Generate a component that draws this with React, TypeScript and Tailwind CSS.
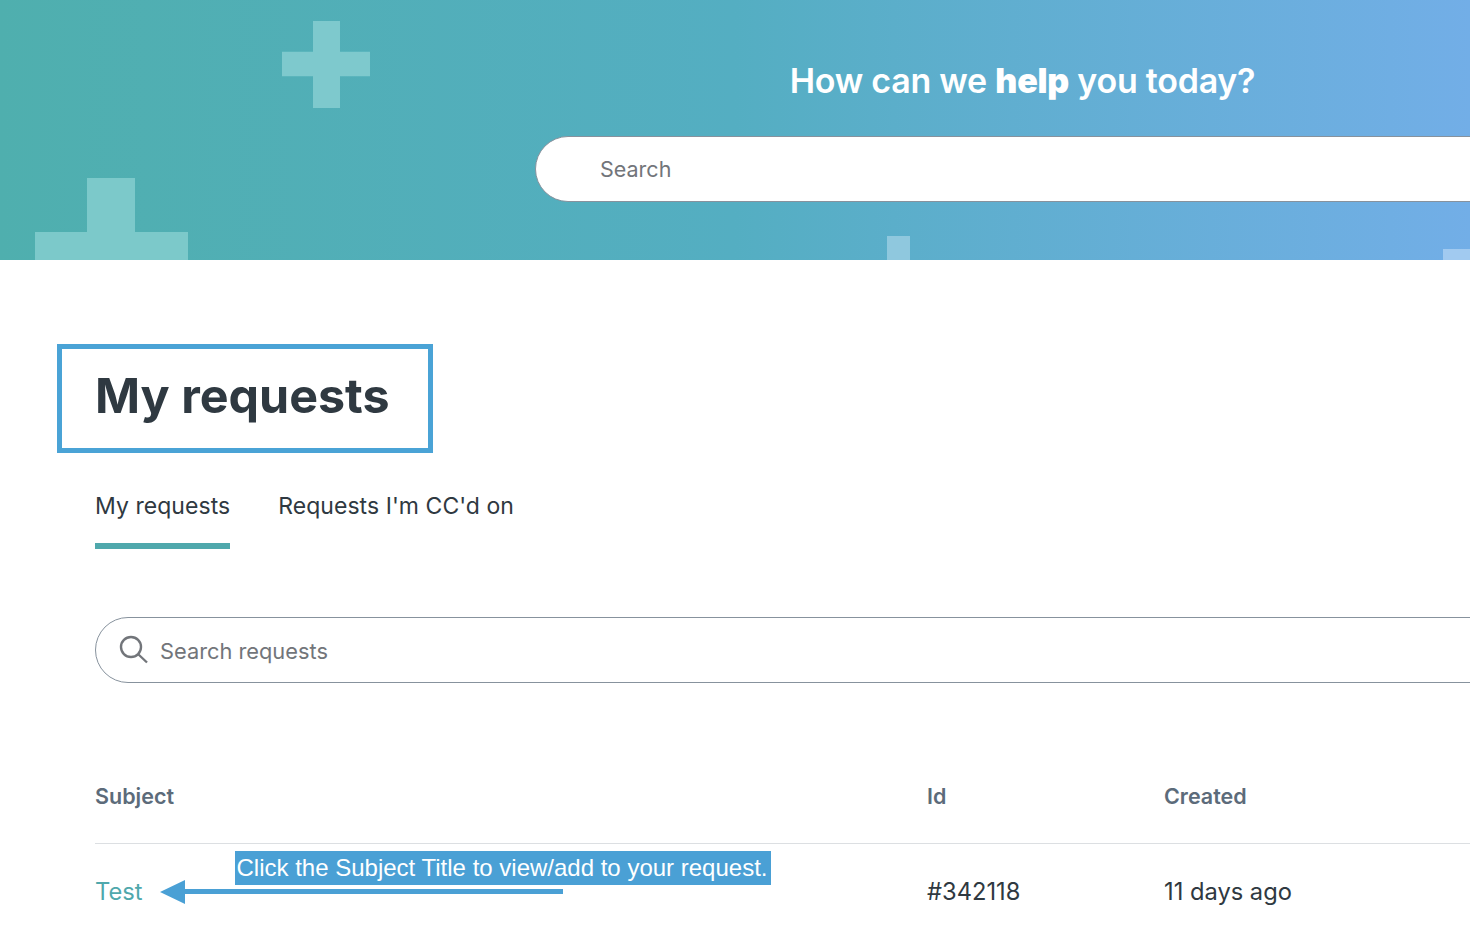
import React from 'react';

const Cross: React.FC<{ className: string }> = ({ className }) => (
  <svg viewBox="0 0 88 88" className={className} fill="currentColor" preserveAspectRatio="none">
    <path d="M31 0h27v31h30v25H58v32H31V56H0V31h31z" />
  </svg>
);

const Hero = () => (
  <section className="relative h-[260px] overflow-hidden bg-gradient-to-r from-[#4fafae] via-[#54aec2] to-[#72aee7]">
    {/* background crosses */}
    <Cross className="absolute left-[282px] top-[21px] w-[88px] h-[87px] text-[#7ec9cd]" />
    <svg viewBox="0 0 153 82" className="absolute left-[35px] top-[178px] w-[153px] h-[82px] text-[#7cc9ca]" fill="currentColor">
      <path d="M52 0h48v54h53v28H0V54h52z" />
    </svg>
    <div className="absolute left-[887px] top-[236px] w-[23px] h-[24px] bg-[#8fc8de]" />
    <div className="absolute left-[1443px] top-[249px] w-[27px] h-[11px] bg-[#a1caf0]" />

    <div className="relative ml-[535px] w-[975px] pt-[61px]">
      <h2 className="text-center text-[34px] leading-[40px] font-semibold tracking-[-0.25px] text-white">
        How can we <strong className="font-black">help</strong> you today?
      </h2>
      <div className="mt-[35px] h-[66px] rounded-full border border-[#87929d] bg-white pl-[64px] flex items-center text-[21.5px] text-[#72757a]">
        Search
      </div>
    </div>
  </section>
);

const RequestsTable = () => (
  <div className="mt-[97px] w-[1500px] text-[23.7px]">
    <div className="grid grid-cols-[832px_237px_1fr] h-[64px] border-b border-[#dcdfe2] text-[21.5px] font-semibold text-[#5c6b7a] pb-[31px] items-center">
      <div>Subject</div>
      <div>Id</div>
      <div>Created</div>
    </div>
    <div className="grid grid-cols-[832px_237px_1fr] pt-[32px] leading-[32px] text-[#2f3941]">
      <a className="text-[#4fa8ac]">Test</a>
      <div>#342118</div>
      <div>11 days ago</div>
    </div>
  </div>
);

export default function App() {
  return (
    <div className="relative w-[1470px] h-[936px] overflow-hidden bg-white font-['Inter',sans-serif]">
      <Hero />
      <main className="pl-[95px] pt-[103px]">
        <h1 className="text-[48.4px] leading-[66px] font-bold text-[#2f3941]">My requests</h1>
        <nav className="mt-[63px] flex gap-[48px] text-[23px] tracking-[0.05px] text-[#2f3941]">
          <div className="h-[57px] border-b-[6px] border-[#4fa8ac] leading-[28px]">My requests</div>
          <div className="leading-[28px]">Requests I'm CC'd on</div>
        </nav>
        <div className="mt-[68px] w-[1500px] h-[66px] rounded-full border border-[#87929d] flex items-center pl-[23px] gap-[11px] text-[21.8px] text-[#72757a]">
          <svg viewBox="0 0 30 30" className="w-[30px] h-[30px]" fill="none" stroke="currentColor" strokeWidth={2.4}>
            <circle cx="12" cy="12" r="10" />
            <path d="M19.5 19.5 28 27.5" />
          </svg>
          <span className="pt-[2px]">Search requests</span>
        </div>
        <RequestsTable />
      </main>

      {/* annotation overlays from the screenshot */}
      <div className="absolute left-[57px] top-[344px] w-[376px] h-[109px] border-[5px] border-[#4aa3d6]" />
      <div className="absolute left-[235px] top-[851px] w-[536px] h-[34px] bg-[#4aa0d5] flex items-center justify-center pr-[2px] text-[24px] text-white font-['Liberation_Sans',sans-serif] whitespace-nowrap">
        Click the Subject Title to view/add to your request.
      </div>
      <svg className="absolute left-[158px] top-[878px] w-[406px] h-[28px] text-[#4aa0d5]" viewBox="0 0 406 28" fill="currentColor">
        <path d="M2 14 27 2v9h378v5H27v10z" />
      </svg>
    </div>
  );
}
